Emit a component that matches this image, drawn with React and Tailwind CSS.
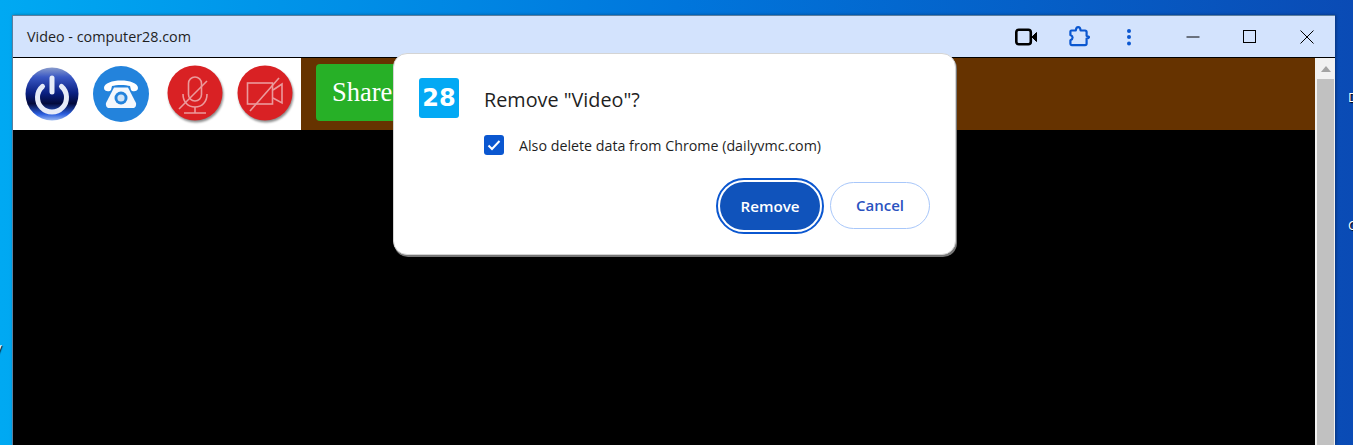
// Chrome PWA "Remove app" dialog on a desktop

function VideoIcon() {
  return (
    <svg width="22" height="18" viewBox="0 0 22 18">
      <rect x="1.3" y="1.8" width="14.5" height="14.4" rx="2.5" fill="none" stroke="#000" strokeWidth="2.6" />
      <path d="M17 9 L21.5 4.5 V13.5 Z" fill="#000" stroke="#000" strokeWidth="1" />
    </svg>
  )
}

function PuzzleIcon() {
  return (
    <svg width="21" height="21" viewBox="0 0 21 21">
      <path
        d="M2.5 4.5 H6.8 C7 2.4 7.8 1.2 9.2 1.2 C10.6 1.2 11.4 2.4 11.6 4.5 H16 C17 4.5 17.6 5.1 17.6 6 V9.8 C19.2 10 20 10.5 20 11.2 C20 11.9 19.2 12.4 17.6 12.6 V17.5 C17.6 18.5 17 19.2 16 19.2 H3 C2 19.2 1.4 18.5 1.4 17.5 V14.2 C3 13.6 3.6 12.7 3.6 11.6 C3.6 10.5 3 9.6 1.4 9 V5.6 C1.4 5 1.9 4.5 2.5 4.5 Z"
        fill="none"
        stroke="#0b57d0"
        strokeWidth="2.2"
        strokeLinejoin="round"
      />
    </svg>
  )
}

function DotsIcon() {
  return (
    <svg width="6" height="18" viewBox="0 0 6 18" fill="#0b57d0">
      <circle cx="3" cy="3" r="2" />
      <circle cx="3" cy="9" r="2" />
      <circle cx="3" cy="15.5" r="2" />
    </svg>
  )
}

function PowerBtn() {
  return (
    <svg width="56" height="56" viewBox="0 0 56 56">
      <defs>
        <linearGradient id="pw" x1="0" y1="0" x2="0" y2="1">
          <stop offset="0" stopColor="#8a9ccc" />
          <stop offset="0.18" stopColor="#3a58c4" />
          <stop offset="0.48" stopColor="#0a2082" />
          <stop offset="0.68" stopColor="#020a3c" />
          <stop offset="0.88" stopColor="#2b5fe0" />
          <stop offset="1" stopColor="#9ab8f0" />
        </linearGradient>
      </defs>
      <circle cx="28" cy="28" r="26.5" fill="url(#pw)" />
      <path d="M18.5 20.5 A14.5 14.5 0 1 0 37.5 20.5" fill="none" stroke="#e6ebf8" strokeWidth="5" strokeLinecap="round" />
      <path d="M28 12 V26" stroke="#e6ebf8" strokeWidth="5" strokeLinecap="round" />
    </svg>
  )
}

function PhoneBtn() {
  return (
    <svg width="56" height="56" viewBox="0 0 56 56">
      <circle cx="28" cy="28" r="28" fill="#2383dc" />
      <path d="M11 22 C11 12 45 12 45 22 C45 26 39 26 38 24 L37 20 C33 18.5 23 18.5 19 20 L18 24 C17 26 11 26 11 22 Z" fill="#fff" />
      <path d="M21 21.5 H35 L43 37 C43.5 40 42 42 40 42 H16 C14 42 12.5 40 13 37 Z" fill="#f4f8fd" />
      <circle cx="28" cy="32" r="6.5" fill="#2383dc" />
      <circle cx="28" cy="32" r="3.6" fill="#cfe3f6" />
    </svg>
  )
}

function MicOffBtn() {
  return (
    <svg width="58" height="58" viewBox="0 0 58 58" className="drop-shadow-[1px_2px_1px_rgba(0,0,0,0.45)]">
      <circle cx="28" cy="28" r="27.5" fill="#d92124" />
      <g fill="none" stroke="#eb9a9c" strokeWidth="1.6">
        <rect x="21.5" y="12" width="13" height="24" rx="6.5" />
        <path d="M16 29 C16 37 21 42 28 42 C35 42 40 37 40 29" />
        <path d="M28 42 V48 M17 48 H39" />
        <path d="M12 44 L40 16" />
      </g>
    </svg>
  )
}

function CamOffBtn() {
  return (
    <svg width="58" height="58" viewBox="0 0 58 58" className="drop-shadow-[1px_2px_1px_rgba(0,0,0,0.45)]">
      <circle cx="28" cy="28" r="27.5" fill="#d92124" />
      <g fill="none" stroke="#eb9a9c" strokeWidth="1.6">
        <rect x="10.5" y="18" width="25" height="21" />
        <path d="M36 25 L45 19 V38 L36 33" />
        <path d="M13 46 L42 13" />
      </g>
    </svg>
  )
}

function RemoveDialog() {
  return (
    <div className="absolute left-[393px] top-[53px] h-[202px] w-[563px] rounded-[14px] border border-[#d4d4d4] bg-white pl-[25px] pr-[25px] pt-[24px] shadow-[1px_2px_0_#777] font-['Open_Sans',sans-serif]">
      <div className="flex">
        <div className="flex h-10 w-10 items-center justify-center rounded-[3px] bg-[#03a9f4] font-['DejaVu_Sans',sans-serif] text-[24px] font-bold text-white">
          28
        </div>
        <div className="ml-[25px] pt-[9px] text-[19.8px] font-medium leading-[26px] text-[#1f1f1f]">Remove "Video"?</div>
      </div>
      <label className="ml-[65px] mt-[17px] flex items-start">
        <span className="flex h-5 w-5 items-center justify-center rounded-[3px] bg-[#0b57d0]">
          <svg width="14" height="12" viewBox="0 0 14 12">
            <path d="M1.5 6.5 L5 10 L12.5 2" fill="none" stroke="#fff" strokeWidth="2" />
          </svg>
        </span>
        <span className="ml-[15px] pt-[1px] text-[14.25px] leading-5 text-[#1f1f1f]">Also delete data from Chrome (dailyvmc.com)</span>
      </label>
      <div className="mt-[26px] flex items-start justify-end gap-[10px]">
        <button className="h-[48px] w-[100px] rounded-full bg-[#1053bb] text-[15.2px] font-semibold text-white outline-[2.5px] outline-offset-2 outline-[#0b57d0]">
          Remove
        </button>
        <button className="h-[47px] w-[100px] rounded-full border-[1.5px] border-[#a8c7fa] bg-white text-[15px] font-semibold text-[#2a52c0]">
          Cancel
        </button>
      </div>
    </div>
  )
}

export default function App() {
  return (
    <div className="relative h-[445px] w-[1353px] overflow-hidden bg-linear-to-r from-[#00a9f2] via-[#0076dc] to-[#0a4bb5] pl-[12px] pt-[15px]">
      {/* desktop icon labels cut off by the screen edge */}
      <span className="absolute left-[1348px] top-[88px] font-['Open_Sans',sans-serif] text-[13px] text-white [text-shadow:1px_1px_1px_#000]">D</span>
      <span className="absolute left-[1348px] top-[216px] font-['Open_Sans',sans-serif] text-[13px] text-white [text-shadow:1px_1px_1px_#000]">C</span>
      <span className="absolute left-[-5px] top-[338px] font-['Open_Sans',sans-serif] text-[13px] text-white [text-shadow:1px_1px_1px_#000]">y</span>

      {/* app window */}
      <div className="flex h-[430px] w-[1323px] flex-col border-l border-t border-[#5d7f9e] shadow-[1px_0_3px_rgba(0,0,0,0.35)]">
        <div className="flex h-[42px] shrink-0 items-center border-b border-black bg-[#d3e3fd] pl-[14px] font-['Open_Sans',sans-serif] text-[14.35px] text-[#1f1f1f]">
          <span>Video - computer28.com</span>
          <div className="ml-auto flex items-center">
            <VideoIcon />
            <div className="ml-[32px]"><PuzzleIcon /></div>
            <div className="ml-[36px]"><DotsIcon /></div>
            <svg className="ml-[54px]" width="14" height="14" viewBox="0 0 14 14">
              <path d="M0.5 7 H13.5" stroke="#000" strokeWidth="1" />
            </svg>
            <svg className="ml-[43px]" width="14" height="14" viewBox="0 0 14 14">
              <rect x="0.5" y="0.5" width="12" height="12" fill="none" stroke="#000" strokeWidth="1" />
            </svg>
            <svg className="ml-[43px] mr-[21px]" width="14" height="14" viewBox="0 0 14 14">
              <path d="M0.5 0.5 L13.5 13.5 M13.5 0.5 L0.5 13.5" stroke="#000" strokeWidth="1" />
            </svg>
          </div>
        </div>

        <div className="flex min-h-0 flex-1">
          <div className="flex min-w-0 flex-1 flex-col bg-black">
            <div className="flex h-[72px] shrink-0 bg-[#663300]">
              <div className="flex h-full w-[288px] items-center bg-white pl-[11px]">
                <PowerBtn />
                <div className="ml-[13px]"><PhoneBtn /></div>
                <div className="ml-[18px]"><MicOffBtn /></div>
                <div className="ml-[12px]"><CamOffBtn /></div>
              </div>
              <button className="ml-[15px] mt-[6px] h-[57px] w-[110px] rounded-[4px] bg-[#27b027] pl-[16px] text-left font-['Liberation_Serif',serif] text-[26.5px] text-white">
                Share
              </button>
            </div>
          </div>
          {/* scrollbar */}
          <div className="flex w-5 shrink-0 flex-col items-center bg-[#f1f1f1] pl-[1px]">
            <div className="flex h-[21px] items-center justify-center">
              <svg width="10" height="6" viewBox="0 0 10 6">
                <path d="M5 0 L10 6 H0 Z" fill="#a3a3a3" />
              </svg>
            </div>
            <div className="w-[17px] flex-1 bg-[#c1c1c1]" />
          </div>
        </div>
      </div>

      <RemoveDialog />
    </div>
  )
}
